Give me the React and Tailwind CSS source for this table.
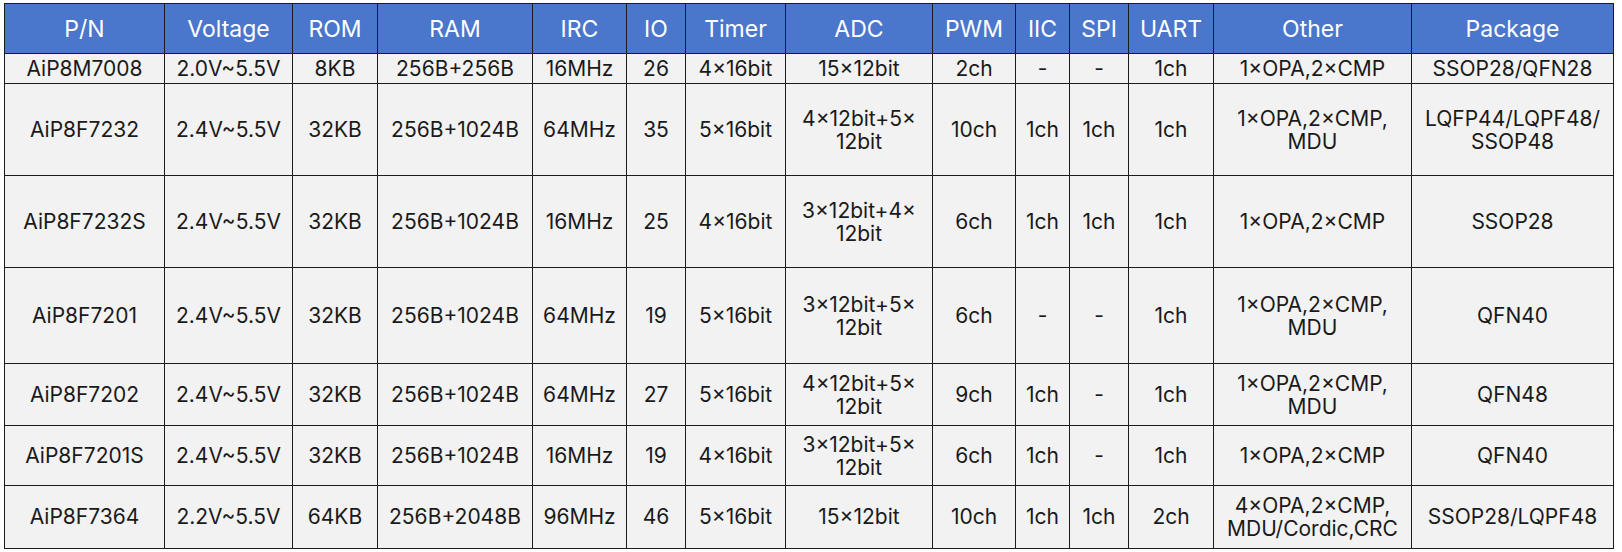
const cols = [160, 128, 85, 155, 94, 59, 100, 147, 83, 54, 59, 85, 198, 202];

const head = ['P/N', 'Voltage', 'ROM', 'RAM', 'IRC', 'IO', 'Timer', 'ADC', 'PWM', 'IIC', 'SPI', 'UART', 'Other', 'Package'];

const rows = [
  { h: 'h-[30px]', cells: ['AiP8M7008', '2.0V~5.5V', '8KB', '256B+256B', '16MHz', '26', '4×16bit', '15×12bit', '2ch', '-', '-', '1ch', '1×OPA,2×CMP', 'SSOP28/QFN28'] },
  { h: 'h-[92px]', cells: ['AiP8F7232', '2.4V~5.5V', '32KB', '256B+1024B', '64MHz', '35', '5×16bit', ['4×12bit+5×', '12bit'], '10ch', '1ch', '1ch', '1ch', ['1×OPA,2×CMP,', 'MDU'], ['LQFP44/LQPF48/', 'SSOP48']] },
  { h: 'h-[92px]', cells: ['AiP8F7232S', '2.4V~5.5V', '32KB', '256B+1024B', '16MHz', '25', '4×16bit', ['3×12bit+4×', '12bit'], '6ch', '1ch', '1ch', '1ch', '1×OPA,2×CMP', 'SSOP28'] },
  { h: 'h-[96px]', cells: ['AiP8F7201', '2.4V~5.5V', '32KB', '256B+1024B', '64MHz', '19', '5×16bit', ['3×12bit+5×', '12bit'], '6ch', '-', '-', '1ch', ['1×OPA,2×CMP,', 'MDU'], 'QFN40'] },
  { h: 'h-[62px]', cells: ['AiP8F7202', '2.4V~5.5V', '32KB', '256B+1024B', '64MHz', '27', '5×16bit', ['4×12bit+5×', '12bit'], '9ch', '1ch', '-', '1ch', ['1×OPA,2×CMP,', 'MDU'], 'QFN48'] },
  { h: 'h-[60px]', cells: ['AiP8F7201S', '2.4V~5.5V', '32KB', '256B+1024B', '16MHz', '19', '4×16bit', ['3×12bit+5×', '12bit'], '6ch', '1ch', '-', '1ch', '1×OPA,2×CMP', 'QFN40'] },
  { h: 'h-[63px]', cells: ['AiP8F7364', '2.2V~5.5V', '64KB', '256B+2048B', '96MHz', '46', '5×16bit', '15×12bit', '10ch', '1ch', '1ch', '2ch', ['4×OPA,2×CMP,', 'MDU/Cordic,CRC'], 'SSOP28/LQPF48'] },
];

function Cell({ value }) {
  if (Array.isArray(value)) {
    return (
      <td className="border border-[#1c1c1c] text-center align-middle p-0 leading-[23px]">
        {value.map((line, i) => (
          <div key={i}>{line}</div>
        ))}
      </td>
    );
  }
  return <td className="border border-[#1c1c1c] text-center align-middle p-0 leading-[24px]">{value}</td>;
}

export default function App() {
  return (
    <div className="w-[1622px] h-[552px] bg-white pl-[4px] pt-[3px]" style={{ fontFamily: 'Inter, "Noto Sans", sans-serif' }}>
      <table className="border-collapse table-fixed w-[1610px] text-[21px] text-[#1a1a1a]">
        <colgroup>
          {cols.map((w, i) => (
            <col key={i} style={{ width: w }} />
          ))}
        </colgroup>
        <thead>
          <tr className="h-[50px] bg-[#4a76cb]">
            {head.map((t) => (
              <th key={t} className="border border-[#1c1c1c] font-normal text-[23px] text-white text-center align-middle p-0 pt-[2px]">
                {t}
              </th>
            ))}
          </tr>
        </thead>
        <tbody className="bg-[#f2f2f2]">
          {rows.map((r, i) => (
            <tr key={i} className={r.h}>
              {r.cells.map((c, j) => (
                <Cell key={j} value={c} />
              ))}
            </tr>
          ))}
        </tbody>
      </table>
    </div>
  );
}
